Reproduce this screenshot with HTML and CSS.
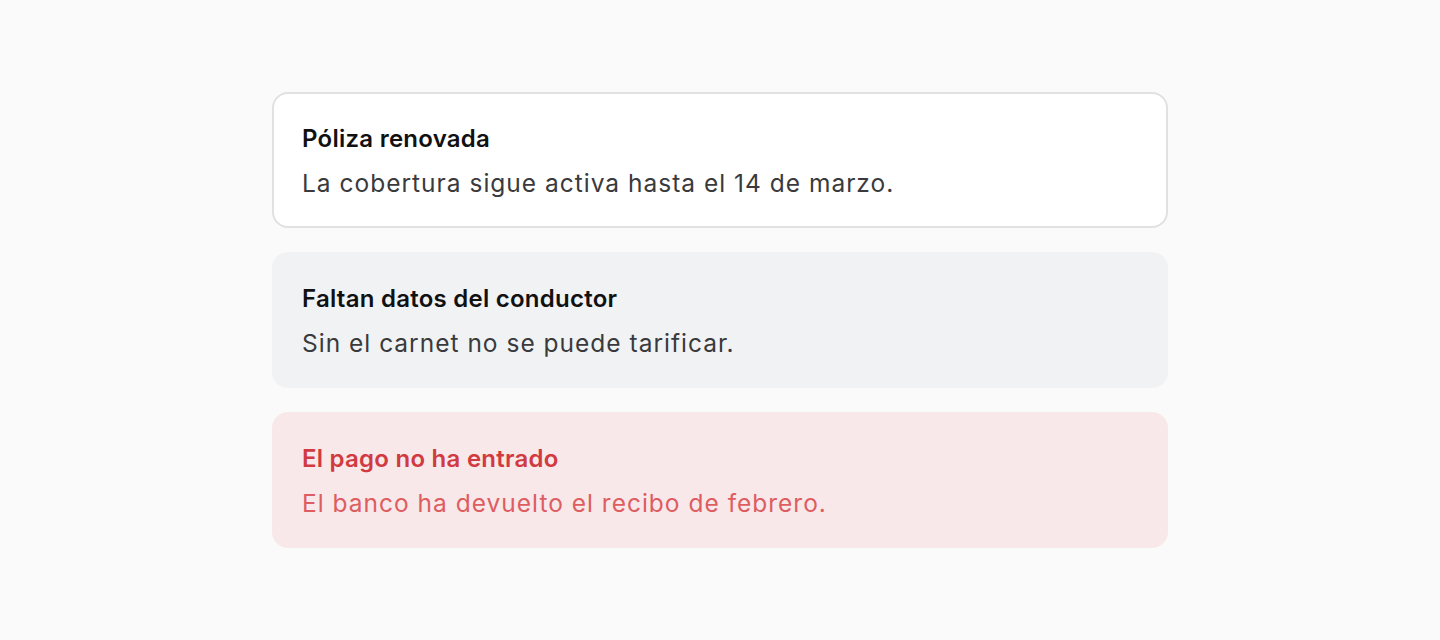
FILE: index.html
```html
<!DOCTYPE html>
<html lang="es">
<head>
<meta charset="utf-8">
<title>Avisos</title>
<link rel="stylesheet" href="styles.css">
</head>
<body>
<main class="stack">
  <section class="notice notice--default">
    <h2 class="notice__title">Póliza renovada</h2>
    <p class="notice__text">La cobertura sigue activa hasta el 14 de marzo.</p>
  </section>
  <section class="notice notice--muted">
    <h2 class="notice__title">Faltan datos del conductor</h2>
    <p class="notice__text">Sin el carnet no se puede tarificar.</p>
  </section>
  <section class="notice notice--danger">
    <h2 class="notice__title">El pago no ha entrado</h2>
    <p class="notice__text">El banco ha devuelto el recibo de febrero.</p>
  </section>
</main>
</body>
</html>
```
FILE: styles.css
```css
* { box-sizing: border-box; }
html, body { margin: 0; padding: 0; }
body {
  background: #fafafa;
  font-family: Inter, "Noto Sans", sans-serif;
  min-height: 640px;
}
.stack {
  width: 896px;
  margin: 0 auto;
  padding-top: 92px;
  display: flex;
  flex-direction: column;
  gap: 24px;
}
.notice {
  height: 136px;
  border: 2px solid transparent;
  border-radius: 16px;
  padding: 29px 28px 24px;
  display: flex;
  flex-direction: column;
  gap: 10px;
}
.notice__title {
  margin: 0;
  font-size: 24px;
  line-height: 32px;
  font-weight: 600;
  letter-spacing: 0.25px;
  color: #111;
}
.notice__text {
  margin: 0;
  font-size: 24.5px;
  line-height: 36px;
  letter-spacing: 1px;
  color: #3a3a3c;
}
.notice--default { background: #fff; border-color: #e1e1e4; }
.notice--muted { background: #f1f2f4; }
.notice--danger { background: #f8e8e9; }
.notice--danger .notice__title { color: #d03a40; }
.notice--danger .notice__text { color: #de5d61; }
```
